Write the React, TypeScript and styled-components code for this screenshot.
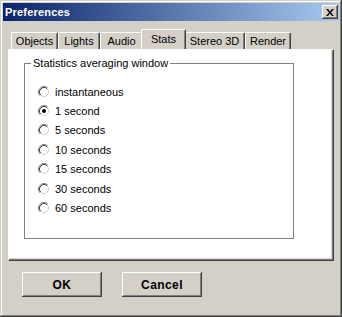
import React from 'react'
import styled, { createGlobalStyle } from 'styled-components'

const GlobalStyle = createGlobalStyle`
  html, body {
    margin: 0;
    padding: 0;
    background: #d4d0c8;
  }
  body {
    font-family: "Liberation Sans", Arial, sans-serif;
    font-size: 11px;
    color: #000;
  }
`

const tabs = [
  { label: 'Objects', width: 47 },
  { label: 'Lights', width: 42 },
  { label: 'Audio', width: 43 },
  { label: 'Stats', width: 41 },
  { label: 'Stereo 3D', width: 61 },
  { label: 'Render', width: 46 },
]

const options = [
  'instantaneous',
  '1 second',
  '5 seconds',
  '10 seconds',
  '15 seconds',
  '30 seconds',
  '60 seconds',
]

const Radio = ({ checked }: { checked: boolean }) => (
  <RadioIcon width="12" height="12" viewBox="0 0 12 12">
    <circle cx="6" cy="6" r="4.5" fill="#fff" />
    <path d="M2.11 9.89 A5.5 5.5 0 0 1 9.89 2.11" stroke="#808080" fill="none" />
    <path d="M9.89 2.11 A5.5 5.5 0 0 1 2.11 9.89" stroke="#fff" fill="none" />
    <path d="M2.82 9.18 A4.5 4.5 0 0 1 9.18 2.82" stroke="#404040" fill="none" />
    <path d="M9.18 2.82 A4.5 4.5 0 0 1 2.82 9.18" stroke="#d4d0c8" fill="none" />
    {checked && <circle cx="6" cy="6" r="2" fill="#000" />}
  </RadioIcon>
)

const App = () => {
  return (
    <>
      <GlobalStyle />
      <Window>
        <TitleBar>
          <Title>Preferences</Title>
          <CloseButton>
            <svg width="8" height="7" viewBox="0 0 8 7">
              <path d="M0 0 L2 0 L4 2.5 L6 0 L8 0 L5 3.5 L8 7 L6 7 L4 4.5 L2 7 L0 7 L3 3.5 Z" fill="#000" />
            </svg>
          </CloseButton>
        </TitleBar>

        <Content>
          <TabStrip>
            {tabs.map((t) => (
              <Tab key={t.label} $w={t.width} $active={t.label === 'Stats'}>
                {t.label}
              </Tab>
            ))}
          </TabStrip>

          <Panel>
            <Group>
              <Legend>Statistics averaging window</Legend>
              <OptionList>
                {options.map((o) => (
                  <Option key={o}>
                    <Radio checked={o === '1 second'} />
                    <span>{o}</span>
                  </Option>
                ))}
              </OptionList>
            </Group>
          </Panel>

          <ButtonRow>
            <Button>OK</Button>
            <Button>Cancel</Button>
          </ButtonRow>
        </Content>
      </Window>
    </>
  )
}

export default App

const Window = styled.div`
  width: 342px;
  height: 317px;
  box-sizing: border-box;
  padding: 3px;
  background: #d4d0c8;
  box-shadow: inset -1px -1px #404040, inset 1px 1px #d4d0c8,
    inset -2px -2px #808080, inset 2px 2px #fff;
  display: flex;
  flex-direction: column;
`
const TitleBar = styled.div`
  height: 18px;
  flex: none;
  display: flex;
  align-items: center;
  justify-content: space-between;
  padding: 0 1px 0 2px;
  background: linear-gradient(to right, #0a246a, #a6caf0);
`
const Title = styled.div`
  color: #fff;
  font-weight: bold;
  font-size: 11px;
  letter-spacing: 0.2px;
`
const CloseButton = styled.div`
  width: 16px;
  height: 14px;
  box-sizing: border-box;
  display: flex;
  align-items: center;
  justify-content: center;
  background: #d4d0c8;
  box-shadow: inset -1px -1px #404040, inset 1px 1px #fff,
    inset -2px -2px #808080, inset 2px 2px #d4d0c8;
`
const Content = styled.div`
  flex: 1;
  padding: 8px 5px 0 5px;
  display: flex;
  flex-direction: column;
`
const TabStrip = styled.div`
  height: 20px;
  display: flex;
  align-items: flex-end;
  padding-left: 3px;
`
const Tab = styled.div<{ $w: number; $active: boolean }>`
  position: relative;
  z-index: ${(p) => (p.$active ? 1 : 0)};
  width: ${(p) => p.$w + (p.$active ? 4 : 0)}px;
  height: ${(p) => (p.$active ? 20 : 17)}px;
  margin: 0 ${(p) => (p.$active ? -2 : 0)}px;
  box-sizing: border-box;
  display: flex;
  align-items: center;
  justify-content: center;
  padding-bottom: ${(p) => (p.$active ? 2 : 0)}px;
  background: #d4d0c8;
  border-top: 1px solid #fff;
  border-left: 1px solid #fff;
  border-right: 1px solid #404040;
  border-radius: 2px 2px 0 0;
  box-shadow: inset -1px 0 #808080;
  font-size: 11px;
`
const Panel = styled.div`
  height: 212px;
  box-sizing: border-box;
  background: #fff;
  border-top: 1px solid #fff;
  border-left: 1px solid #fff;
  border-right: 1px solid #404040;
  border-bottom: 1px solid #404040;
  box-shadow: inset -1px -1px #808080, inset -2px -2px #d4d0c8;
  padding: 7px 0 0 15px;
`
const Group = styled.fieldset`
  margin: 0;
  width: 270px;
  height: 182px;
  box-sizing: border-box;
  border: 1px solid #808080;
  padding: 0 0 0 6px;
`
const Legend = styled.legend`
  padding: 0 2px;
  line-height: 13px;
  font-size: 11px;
`
const OptionList = styled.div`
  padding: 12px 0 0 7px;
  display: flex;
  flex-direction: column;
`
const Option = styled.div`
  height: 19.4px;
  display: flex;
  align-items: center;
  gap: 5px;
  font-size: 11px;
`
const RadioIcon = styled.svg`
  flex: none;
  display: block;
`
const ButtonRow = styled.div`
  display: flex;
  gap: 20px;
  padding: 11px 0 0 14px;
`
const Button = styled.div`
  width: 80px;
  height: 25px;
  box-sizing: border-box;
  display: flex;
  align-items: center;
  justify-content: center;
  background: #d4d0c8;
  box-shadow: inset -1px -1px #404040, inset 1px 1px #fff,
    inset -2px -2px #808080, inset 2px 2px #d4d0c8;
  font-weight: bold;
  font-size: 12px;
  letter-spacing: 0.4px;
`
